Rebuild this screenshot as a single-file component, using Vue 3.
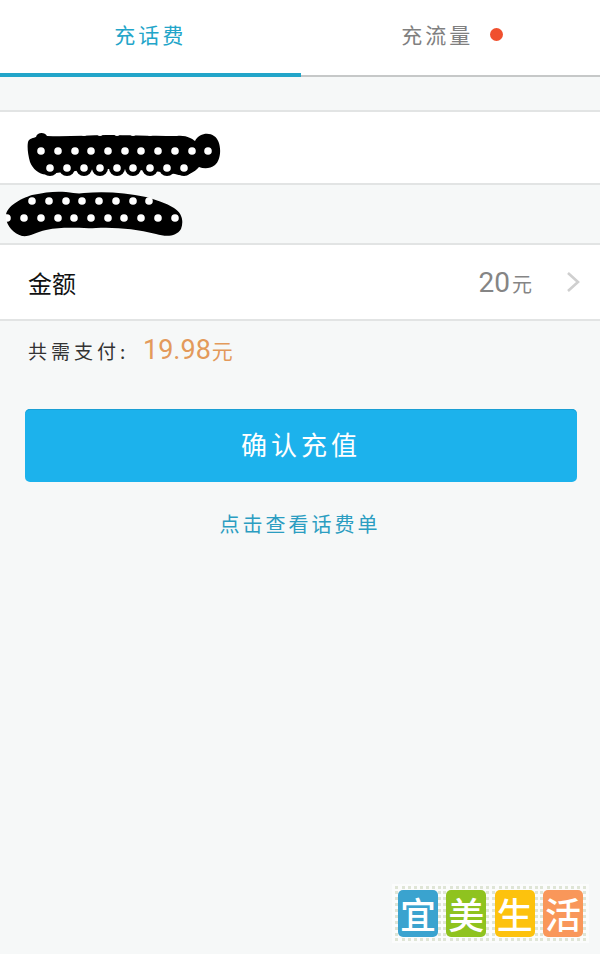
<script setup>
// 打码涂抹的白点位置（相对各自 svg）
const row = (xs, y) => xs.map((x) => ({ x, y }))
const dotsA = [
  ...row([14, 31, 48, 64, 81, 98, 114, 131, 148, 165, 181], 19),
  ...row([23, 40, 57, 73, 90, 106, 123, 140, 157], 36),
]
const edgeA = row([23, 40, 57, 73, 90, 106, 123, 140], 1)
const dotsB = [
  ...row([26, 43, 60, 76, 93, 110, 127, 143], 10),
  ...row([1, 18, 35, 52, 68, 85, 102, 118, 135, 152, 169], 27),
]
const tiles = [
  { t: '宜', c: '#3aa3cf' },
  { t: '美', c: '#8fc31f' },
  { t: '生', c: '#fdc20d' },
  { t: '活', c: '#f9975a' },
]
</script>

<template>
  <div class="page">
    <div class="tabs">
      <div class="tab on"><span>充话费</span></div>
      <div class="tab"><span>充流量</span><i class="red"></i></div>
    </div>

    <div class="row first">
      <svg class="mask a" width="194" height="46" viewBox="0 0 194 46">
        <path
          d="M1 10 C2 6 7 6 9 5 C10 0 18 0 20 4 C40 5 60 3 80 3 C100 3 120 4 150 4 C160 3 165 7 168 9 C172 1 182 0 187 4 C195 9 195 27 188 33 C183 37 177 37 172 35 C165 43 156 45 148 42 C125 38 100 37 75 37 C55 38 35 40 22 42 C14 44 6 38 3 30 C1 23 0 15 1 10 Z"
          fill="#000"
        />
        <circle v-for="(d, i) in dotsA.slice(11)" :key="'b' + i" :cx="d.x" :cy="d.y" r="8" fill="#000" />
        <circle v-for="(d, i) in edgeA" :key="'e' + i" :cx="d.x" :cy="d.y" r="3" fill="#fff" />
        <circle v-for="(d, i) in dotsA" :key="i" :cx="d.x" :cy="d.y" r="3.8" fill="#fff" />
      </svg>
    </div>
    <div class="row second">
      <svg class="mask b" width="178" height="46" viewBox="0 0 178 46">
        <path
          d="M0 24 C1 15 14 8 26 4 C40 1 50 0 60 1 C68 2 72 3 78 2 C100 0 120 2 140 6 C150 9 160 12 168 17 C176 22 178 30 175 38 C170 46 160 46 150 43 C130 38 110 36 90 37 C75 38 60 35 40 39 C30 41 24 46 16 45 C6 42 -1 32 0 24 Z"
          fill="#000"
        />
        <circle v-for="(d, i) in dotsB" :key="i" :cx="d.x" :cy="d.y" r="3.8" fill="#fff" />
      </svg>
    </div>
    <div class="row amount">
      <span class="label">金额</span>
      <span class="value"><b>20</b>元</span>
      <svg class="arrow" width="16" height="24" viewBox="0 0 16 24">
        <path d="M3 3 L13 12 L3 21" fill="none" stroke="#cfcfcf" stroke-width="2.6" />
      </svg>
    </div>

    <div class="pay">
      <span class="pay-label">共需支付:</span>
      <span class="pay-num"><b>19.98</b>元</span>
    </div>

    <button class="confirm">确认充值</button>
    <div class="link">点击查看话费单</div>

    <div class="logo">
      <div v-for="x in tiles" :key="x.t" class="frame">
        <div class="tile" :style="{ background: x.c }">{{ x.t }}</div>
      </div>
    </div>
  </div>
</template>

<style scoped>
.page {
  width: 600px;
  height: 954px;
  position: relative;
  overflow: hidden;
  background: #f6f8f8;
  font-family: 'Noto Sans CJK SC', 'Liberation Sans', sans-serif;
  color: #222;
}
.tabs {
  display: flex;
  height: 77px;
  background: #fff;
  box-sizing: border-box;
  border-bottom: 2px solid #c6c8c8;
}
.tab {
  width: 300px;
  height: 77px;
  box-sizing: border-box;
  padding-bottom: 10px;
  display: flex;
  align-items: center;
  justify-content: center;
  font-size: 21px;
  letter-spacing: 3px;
  color: #808080;
  position: relative;
}
.tab.on {
  width: 301px;
  color: #22a5c9;
  border-bottom: 4px solid #22a5c9;
  padding-bottom: 6px;
}
.tab:not(.on) span {
  margin-left: -26px;
}
.red {
  position: absolute;
  left: 189px;
  top: 28px;
  width: 13px;
  height: 13px;
  border-radius: 50%;
  background: #f0502e;
}
.row {
  display: flex;
  align-items: center;
  box-sizing: border-box;
  border-bottom: 2px solid #e2e4e4;
}
.first {
  margin-top: 33px;
  height: 75px;
  background: #fff;
  border-top: 2px solid #e2e4e4;
  padding-left: 27px;
}
.mask.a {
  margin-top: 15px;
}
.second {
  height: 60px;
  padding-left: 6px;
}
.amount {
  height: 76px;
  background: #fff;
  padding: 0 19px 0 28px;
}
.label {
  font-size: 24px;
  color: #111;
  flex: 1;
}
.value {
  font-size: 20px;
  color: #858585;
  margin-right: 33px;
}
.value b {
  font-family: Roboto, 'Liberation Sans', sans-serif;
  font-size: 28px;
  font-weight: 400;
  margin-right: 2px;
}
.arrow {
  flex: none;
}
.pay {
  height: 58px;
  display: flex;
  align-items: center;
  padding-left: 28px;
}
.pay-label {
  font-size: 19px;
  letter-spacing: 4px;
  color: #333;
  width: 115px;
}
.pay-num {
  font-size: 21px;
  color: #e39a5b;
}
.pay-num b {
  font-family: Roboto, 'Liberation Sans', sans-serif;
  font-size: 27px;
  font-weight: 400;
  margin-right: 1px;
}
.confirm {
  display: block;
  margin: 30px 0 0 25px;
  padding: 0 0 4px;
  width: 552px;
  height: 73px;
  border: none;
  border-radius: 5px;
  background: #1cb2ec;
  box-shadow: inset 0 1px 0 #1a9fd4;
  color: #fff;
  font-family: inherit;
  font-size: 26px;
  letter-spacing: 4px;
}
.link {
  margin-top: 27px;
  text-align: center;
  font-size: 20px;
  letter-spacing: 3px;
  color: #2b9dc1;
}
.logo {
  position: absolute;
  left: 392px;
  top: 884px;
  width: 197px;
  height: 59px;
  box-sizing: border-box;
  padding: 2px 3px;
  background: #fbfcfc;
  display: flex;
  justify-content: space-between;
}
.frame {
  width: 46px;
  height: 55px;
  box-sizing: border-box;
  border: 3px dotted #dfe5d6;
  display: flex;
  align-items: center;
  justify-content: center;
}
.tile {
  width: 40px;
  height: 47px;
  border-radius: 5px;
  color: #fff;
  font-size: 36px;
  font-weight: 500;
  line-height: 46px;
  text-align: center;
}
</style>
